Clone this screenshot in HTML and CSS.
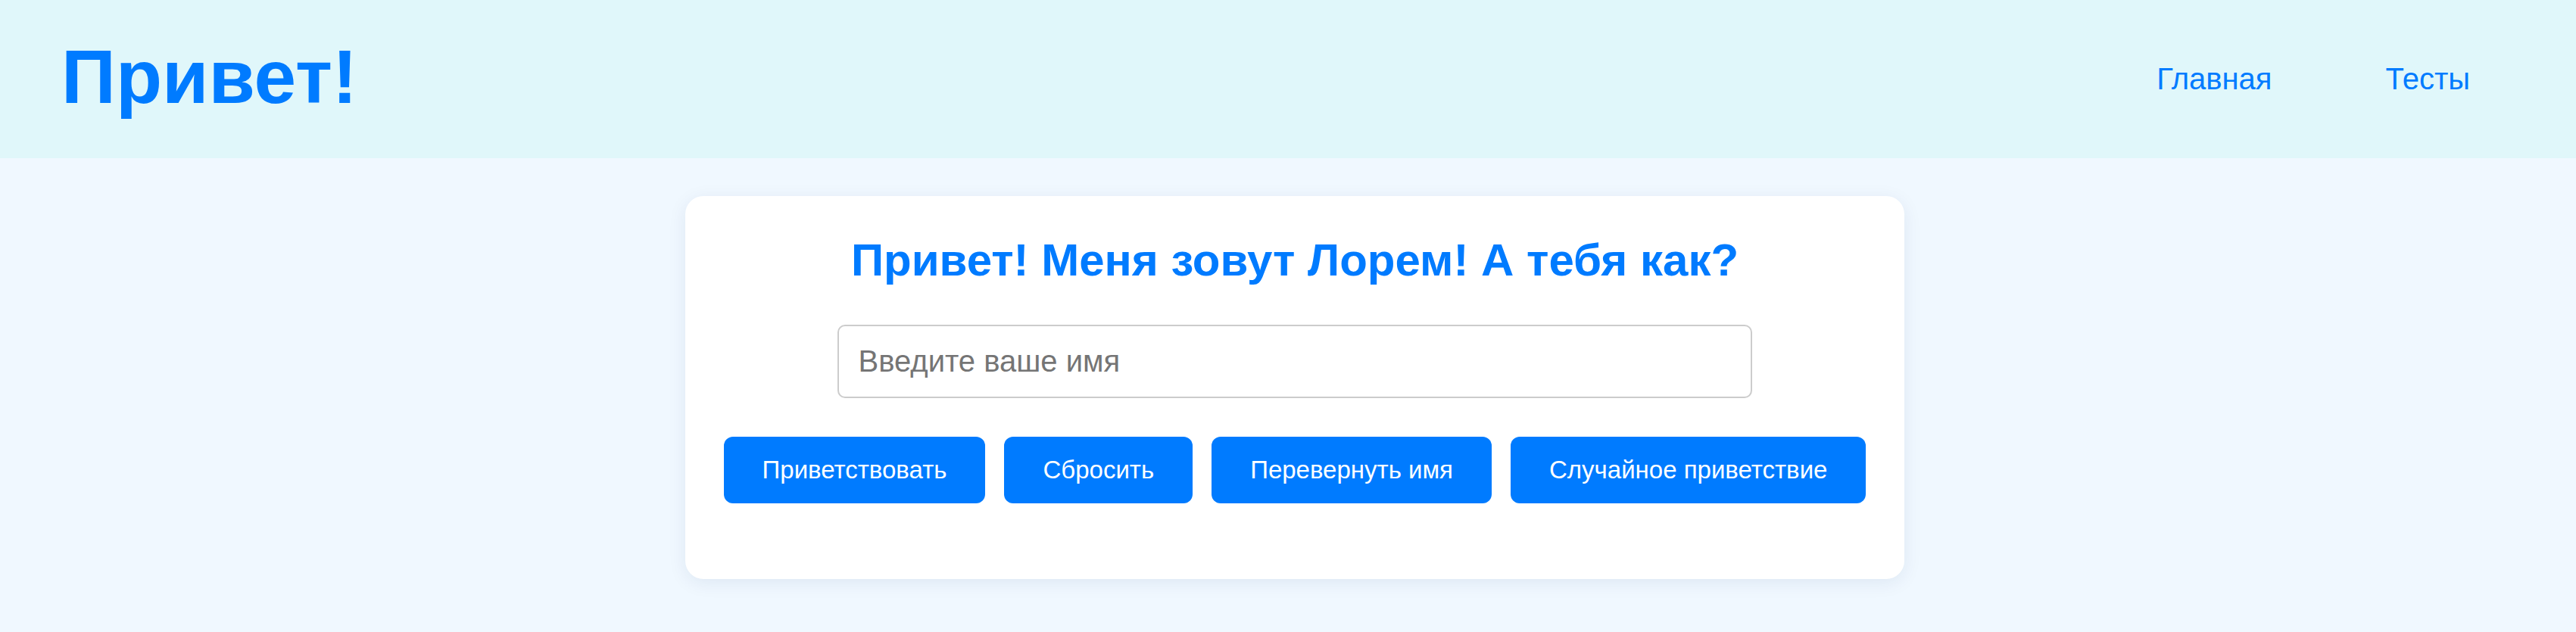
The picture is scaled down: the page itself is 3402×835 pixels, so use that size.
FILE: index.html
```html
<!DOCTYPE html>
<html lang="ru">
<head>
<meta charset="utf-8">
<title>Привет!</title>
<link rel="stylesheet" href="styles.css">
</head>
<body>
<header class="site-header">
  <h1 class="logo">Привет!</h1>
  <nav class="nav">
    <a class="nav-link" href="#">Главная</a>
    <a class="nav-link" href="#">Тесты</a>
  </nav>
</header>
<main class="main">
  <section class="card">
    <h2 class="card-title">Привет! Меня зовут Лорем! А тебя как?</h2>
    <input class="name-input" type="text" placeholder="Введите ваше имя">
    <div class="actions">
      <button class="btn">Приветствовать</button>
      <button class="btn">Сбросить</button>
      <button class="btn">Перевернуть имя</button>
      <button class="btn">Случайное приветствие</button>
    </div>
    <div class="result"></div>
  </section>
</main>
</body>
</html>
```

FILE: styles.css
```css
* { box-sizing: border-box; }

html, body {
  margin: 0;
  padding: 0;
}

body {
  background: #f0f8ff;
  font-family: "Liberation Sans", Arial, sans-serif;
  min-height: 835px;
}

.site-header {
  height: 209px;
  background: #e0f7fa;
  display: flex;
  align-items: center;
  justify-content: space-between;
  padding: 0 140px 0 81px;
}

.logo {
  margin: 0;
  font-size: 100px;
  font-weight: bold;
  color: #007bff;
  line-height: 1;
  position: relative;
  top: -4px;
}

.nav {
  display: flex;
  gap: 150px;
}

.nav-link {
  color: #007bff;
  text-decoration: none;
  font-size: 40px;
}

.main {
  display: flex;
  justify-content: center;
  padding: 50px 0 0 18px;
}

.card {
  background: #ffffff;
  border-radius: 24px;
  box-shadow: 0 5px 25px rgba(0, 40, 100, 0.08);
  padding: 50px 51px 50px;
  display: flex;
  flex-direction: column;
  align-items: center;
  width: fit-content;
}

.card-title {
  margin: 0;
  color: #007bff;
  font-size: 60px;
  font-weight: bold;
  text-align: center;
}

.name-input {
  margin-top: 51px;
  width: 80%;
  height: 97px;
  border: 2px solid #cccccc;
  border-radius: 10px;
  padding: 0 25px;
  font-family: "Liberation Sans", Arial, sans-serif;
  font-size: 40px;
  color: #333;
  background: #fff;
}

.name-input::placeholder {
  color: #757575;
}

.actions {
  margin-top: 51px;
  display: flex;
  gap: 25px;
}

.btn {
  height: 88px;
  padding: 0 51px;
  background: #007bff;
  color: #ffffff;
  border: none;
  border-radius: 12px;
  font-family: "Liberation Sans", Arial, sans-serif;
  font-size: 33px;
  white-space: nowrap;
}

.result {
  height: 50px;
}
```
